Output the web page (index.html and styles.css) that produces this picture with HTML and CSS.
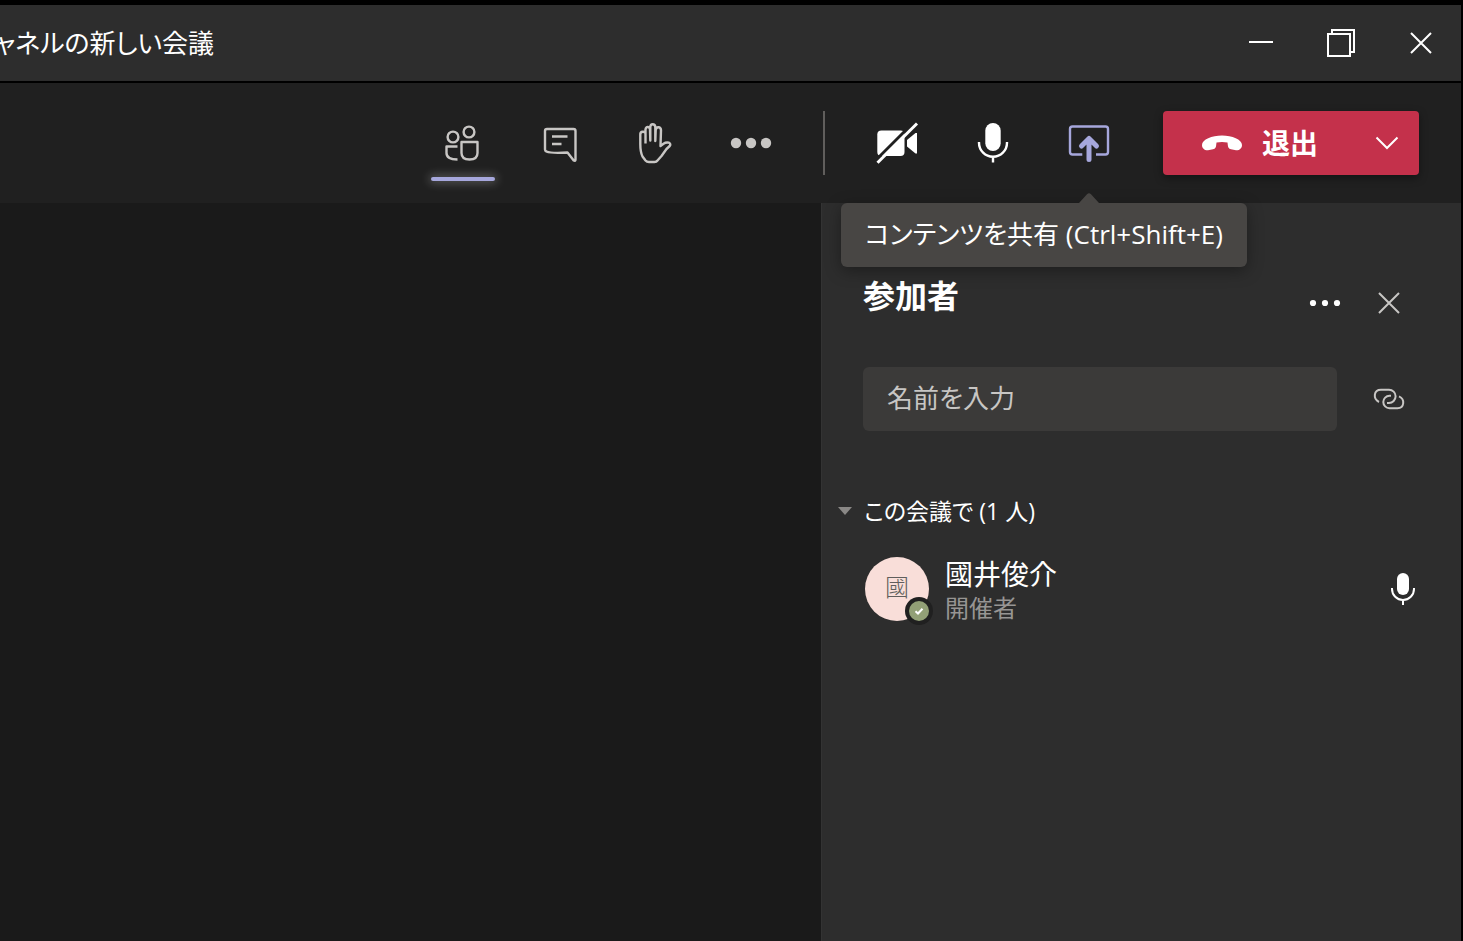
FILE: index.html
```html
<!DOCTYPE html>
<html lang="ja">
<head>
    <meta charset="UTF-8">
    <meta name="viewport" content="width=device-width, initial-scale=1.0">
    <title>チャネルの新しい会議</title>
    <link rel="stylesheet" href="styles.css">
</head>
<body>

    <!-- タイトルバー -->
    <header class="titlebar">
        <div class="window-title">ャネルの新しい会議</div>
        <div class="window-controls">
            <button class="window-button" aria-label="最小化">
                <svg width="28" height="28" viewBox="0 0 28 28"><path d="M2 13h24"/></svg>
            </button>
            <button class="window-button" aria-label="元に戻す">
                <svg width="28" height="28" viewBox="0 0 28 28"><path d="M1 5h22v22h-22zM5 5V1h22v22h-4"/></svg>
            </button>
            <button class="window-button" aria-label="閉じる">
                <svg width="28" height="28" viewBox="0 0 28 28"><path d="M4 4l20 20M24 4L4 24"/></svg>
            </button>
        </div>
    </header>

    <!-- 会議ツールバー -->
    <nav class="toolbar">
        <div class="tool-group">
            <button class="tool active" aria-label="参加者を表示">
                <svg width="64" height="64" viewBox="0 0 64 64">
                    <circle cx="22" cy="26" r="5.4"/>
                    <circle cx="38" cy="21" r="5.4"/>
                    <path d="M26.5 35.5H15.5V42Q15.5 48.5 26.5 48.5"/>
                    <path d="M30.5 31H46.5V42Q46.5 48.5 38.5 48.5T30.5 42Z"/>
                </svg>
            </button>
            <button class="tool" aria-label="会話の表示">
                <svg width="64" height="64" viewBox="0 0 64 64">
                    <path d="M20 18H46.5Q48.5 18 48.5 20V48.5Q48.5 50.5 46.7 49.5L40.5 41.5Q24 42.5 19.5 40.5Q18 40 18 38.5V20Q18 18 20 18Z"/>
                    <path d="M25 25.5H40.5M25 33H34.5"/>
                </svg>
            </button>
            <button class="tool" aria-label="手を挙げる">
                <svg width="64" height="64" viewBox="0 0 64 64">
                    <path d="M22.5 32.5V22.5Q22.3 20.5 19.7 20.7T17.3 23.5V33Q17.3 41 19.5 45.5L22.5 49.5Q23.8 51 26 51H31.5Q33.5 51 34.5 49.5L38.5 45L43.5 38L46.7 35Q48.2 33 46 31.7Q43 31 40.5 32.7L37.5 35L38 19.2Q37.8 16.5 35.5 16.3T32.7 19L32.3 30V16Q32 13.3 29.7 13.3T27.3 16V29.5L27 18.3Q26.5 16 24.7 16T22.5 18.5V32.5"/>
                </svg>
            </button>
            <button class="tool" aria-label="その他の操作">
                <svg class="solid" width="64" height="64" viewBox="0 0 64 64">
                    <circle cx="17" cy="32" r="5.2"/><circle cx="32" cy="32" r="5.2"/><circle cx="47" cy="32" r="5.2"/>
                </svg>
            </button>
        </div>

        <div class="divider"></div>

        <div class="tool-group">
            <button class="tool white" aria-label="カメラをオンにする">
                <svg class="solid" width="64" height="64" viewBox="0 0 64 64">
                    <path d="M16.5 19.5H35.5Q39.5 19.5 39.5 23.5V41Q39.5 45 35.5 45H16.5Q12.3 45 12.3 41V23.5Q12.3 19.5 16.5 19.5Z"/>
                    <path d="M52 22V42.5H50.5L42 35.5V29L50.5 22Z"/>
                    <path class="slash-gap" d="M10.5 49.5L49.5 10.5"/>
                    <path class="slash" d="M12.5 51.7L52 12.5"/>
                </svg>
            </button>
            <button class="tool white" aria-label="ミュート">
                <svg width="64" height="64" viewBox="0 0 64 64">
                    <rect class="mic-body" x="24.3" y="12" width="15.4" height="28" rx="7.7"/>
                    <path d="M18 31v.8a14 14 0 0 0 28 0V31M32 46V51.5"/>
                </svg>
            </button>
            <div class="share">
                <button class="tool purple" aria-label="コンテンツを共有" aria-describedby="shareTip">
                    <svg width="64" height="64" viewBox="0 0 64 64">
                        <path d="M25.3 43.5H15.5Q13 43.5 13 41V18Q13 15.5 15.5 15.5H48.5Q51 15.5 51 18V41Q51 43.5 48.5 43.5H39"/>
                        <path class="arrow" d="M32 48.5V28M24.5 35L32 27.5L39.5 35"/>
                    </svg>
                </button>
                <div class="tooltip" id="shareTip" role="tooltip">
                    コンテンツを共有 (Ctrl+Shift+E)
                    <svg class="tooltip-arrow" width="20" height="10" viewBox="0 0 20 10"><path d="M0 10L8 1.3Q10 -1 12 1.3L20 10Z"/></svg>
                </div>
            </div>
        </div>

        <div class="leave">
            <button class="leave-main">
                <svg width="40" height="16" viewBox="0 0 40 16"><path d="M20 .5C30 .5 40 4.5 40 10C40 13.3 37.5 15.5 34 15.3L29 14.3C26.5 13.5 26 12.5 25.8 10L25.5 7.5Q20 6.3 14.5 7.5L14.2 10C14 12.5 13.5 13.5 11 14.3L6 15.3C2.5 15.5 0 13.3 0 10C0 4.5 10 .5 20 .5Z"/></svg>
                退出
            </button>
            <button class="leave-more" aria-label="その他の退出オプション">
                <svg width="24" height="14" viewBox="0 0 24 14"><path d="M1.5 1.5L12 12L22.5 1.5"/></svg>
            </button>
        </div>
    </nav>

    <main class="meeting">
        <section class="stage"></section>

        <!-- 参加者パネル -->
        <aside class="panel">
            <div class="panel-header">
                <h2>参加者</h2>
                <button class="icon-button" aria-label="その他のオプション">
                    <svg class="dots" width="32" height="32" viewBox="0 0 32 32"><circle cx="4" cy="16" r="3.1"/><circle cx="16" cy="16" r="3.1"/><circle cx="28" cy="16" r="3.1"/></svg>
                </button>
                <button class="icon-button" aria-label="閉じる">
                    <svg width="32" height="32" viewBox="0 0 32 32"><path d="M6 6l20 20M26 6L6 26"/></svg>
                </button>
            </div>

            <div class="search">
                <input class="search-input" type="text" placeholder="名前を入力" aria-label="名前を入力">
                <button class="icon-button" aria-label="リンクをコピー">
                    <svg width="32" height="24" viewBox="0 0 32 24">
                        <path d="M6 15C-.2 12 .5 2.7 8 2.7H16A6.6 6.6 0 0 1 16 15.9H14"/>
                        <path d="M26 9.3C32.2 12 31.5 21.2 24.5 21.2H16.5A6.2 6.2 0 0 1 16.5 8.8H18"/>
                    </svg>
                </button>
            </div>

            <button class="section-toggle" aria-expanded="true">
                <svg width="14" height="8" viewBox="0 0 14 8"><path d="M0 0H14L7 8Z"/></svg>
                この会議で (1 人)
            </button>

            <ul class="people">
                <li class="person">
                    <div class="avatar">國
                        <svg class="presence" width="28" height="28" viewBox="0 0 28 28"><circle class="ring" cx="14" cy="14" r="14"/><circle class="status" cx="14" cy="14" r="10"/><path d="M10.5 14.3L13 16.5L17.5 11.8"/></svg>
                    </div>
                    <div class="person-text">
                        <div class="person-name">國井俊介</div>
                        <div class="person-role">開催者</div>
                    </div>
                    <svg class="person-mic" width="32" height="32" viewBox="0 0 32 32">
                        <rect x="10" y="0" width="12" height="22" rx="6"/>
                        <path d="M5 15v1a11 11 0 0 0 22 0V15M16 27v5"/>
                    </svg>
                </li>
            </ul>
        </aside>
    </main>

</body>
</html>
```
FILE: styles.css
```css
* {
    box-sizing: border-box;
}
body {
    display: flex;
    flex-direction: column;
    min-height: 100vh;
    margin: 0;
    padding: 5px 2px 0 0;
    background-color: #000;
    color: #fff;
    font-family: "Open Sans", "Noto Sans CJK JP", sans-serif;
    font-size: 26px;
    line-height: 40px;
    font-feature-settings: "palt";
    overflow: hidden;
}
button {
    display: flex;
    align-items: center;
    justify-content: center;
    padding: 0;
    border: none;
    background: none;
    color: inherit;
    font: inherit;
    font-feature-settings: inherit;
    cursor: pointer;
}
svg {
    display: block;
    fill: none;
}

/* タイトルバー */
.titlebar {
    display: flex;
    align-items: center;
    justify-content: space-between;
    height: 76px;
    background-color: #2d2d2d;
}
.window-title {
    margin-left: -6px; /* ウィンドウの左端からはみ出す */
    white-space: nowrap;
}
.window-controls {
    display: flex;
}
.window-button {
    width: 80px;
    height: 76px;
    stroke: #fff;
    stroke-width: 2;
}

/* ツールバー */
.toolbar {
    display: flex;
    justify-content: flex-end;
    margin-top: 2px;
    padding: 28px 42px 28px 0;
    background-color: #202020;
}
.tool-group {
    display: flex;
    gap: 32px;
}
.tool {
    position: relative;
    width: 64px;
    height: 64px;
    color: #c8c6c4;
    stroke: currentColor;
    stroke-width: 2.4;
    stroke-linejoin: round;
}
.tool.white {
    color: #fff;
}
.tool.purple {
    color: #a6a7dc;
}
.tool .solid {
    fill: currentColor;
    stroke: none;
}
.tool .slash-gap {
    stroke: #202020;
    stroke-width: 3;
}
.tool .slash {
    stroke: #fff;
    stroke-width: 3;
}
.tool .mic-body {
    fill: currentColor;
    stroke: none;
}
.tool .arrow {
    stroke-width: 5;
    stroke-linecap: round;
}
.active::after {
    content: "";
    position: absolute;
    left: 0;
    right: 0;
    bottom: -6px;
    height: 4px;
    border-radius: 2px;
    background-color: #a6a7dc;
    box-shadow: 0 0 10px 2px rgba(255, 255, 255, 0.25);
}
.divider {
    width: 2px;
    margin: 0 40px;
    background-color: #605e5c;
}
.share {
    position: relative;
}
.tooltip {
    position: absolute;
    z-index: 1;
    top: 92px;
    right: -126px;
    padding: 11px 24px 13px;
    border-radius: 6px;
    background-color: #484644;
    box-shadow: 0 4px 16px rgba(0, 0, 0, 0.35);
    white-space: nowrap;
}
.tooltip-arrow {
    position: absolute;
    top: -10px;
    right: 148px;
    fill: #484644;
}
.leave {
    display: flex;
    margin-left: 42px;
    border-radius: 4px;
    background-color: #c4314b;
    box-shadow: 0 3px 8px rgba(0, 0, 0, 0.4);
}
.leave-main {
    gap: 20px;
    width: 192px;
    padding-left: 2px;
    font-size: 28px;
    font-weight: 700;
}
.leave-main svg {
    fill: #fff;
}
.leave-more {
    width: 64px;
    stroke: #fff;
    stroke-width: 2;
}

/* 会議エリア */
.meeting {
    display: flex;
    flex: 1;
}
.stage {
    flex: 1;
    background-color: #1a1a1a;
}
.panel {
    flex: 0 0 640px;
    padding: 68px 40px 0 41px;
    border-left: 1px solid #333;
    background-color: #2d2d2d;
}
.panel-header {
    display: flex;
    height: 64px;
}
h2 {
    flex: 1;
    margin: 0;
    font-size: 32px;
    line-height: 50px;
}
.icon-button {
    width: 64px;
    height: 64px;
    stroke: #c8c6c4;
    stroke-width: 2;
}
.dots {
    fill: #fff;
    stroke: none;
}
.search {
    display: flex;
    gap: 20px;
    margin-top: 32px;
}
.search-input {
    flex: 1;
    min-width: 0;
    height: 64px;
    padding: 0 24px 2px;
    border: none;
    border-radius: 6px;
    background-color: #3b3a39;
    color: #fff;
    font: inherit;
    font-feature-settings: inherit;
}
.search-input::placeholder {
    color: #c8c6c4;
    opacity: 1;
}
.section-toggle {
    gap: 12px;
    height: 48px;
    margin: 56px 0 0 -25px;
    font-size: 23px;
}
.section-toggle svg {
    fill: #8a8886;
}
.people {
    margin: 22px 0 0;
    padding: 0 2px;
    list-style: none;
}
.person {
    display: flex;
    align-items: center;
    gap: 16px;
    height: 64px;
}
.avatar {
    position: relative;
    width: 64px;
    height: 64px;
    border-radius: 50%;
    background-color: #f9ded9;
    color: #605e5c;
    font-size: 24px;
    font-weight: 300;
    line-height: 60px;
    text-align: center;
}
.presence {
    position: absolute;
    right: -4px;
    bottom: -4px;
    stroke: #fff;
    stroke-width: 2;
}
.presence .ring {
    fill: #202020;
    stroke: none;
}
.presence .status {
    fill: #92a076;
    stroke: none;
}
.person-text {
    flex: 1;
    padding-top: 4px;
    font-size: 28px;
    line-height: 34px;
}
.person-role {
    color: #979593;
    font-size: 24px;
}
.person-mic {
    stroke: #fff;
    stroke-width: 2;
}
.person-mic rect {
    fill: #fff;
    stroke: none;
}
```
